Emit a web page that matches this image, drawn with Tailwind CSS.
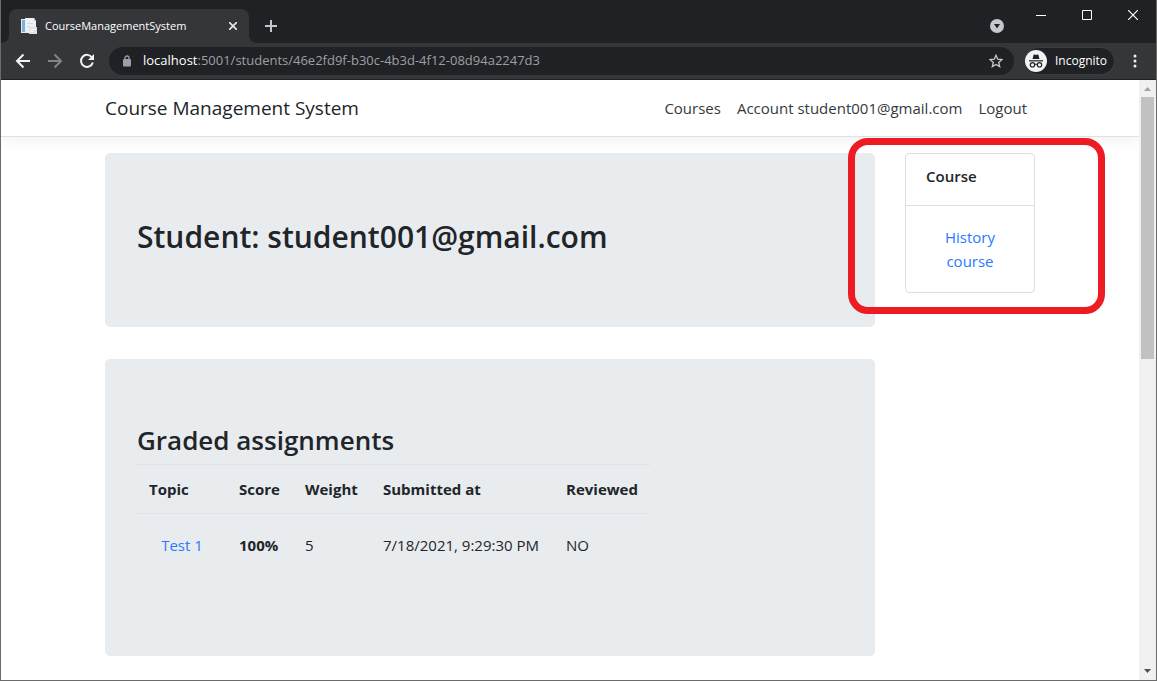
<!DOCTYPE html>
<html lang="en">
<head>
<meta charset="utf-8">
<title>CourseManagementSystem</title>
<script src="https://cdn.jsdelivr.net/npm/@tailwindcss/browser@4"></script>
</head>
<body class="font-['Open_Sans','Noto_Sans',sans-serif] text-[#212529]">
<div class="flex h-screen flex-col overflow-hidden border-x border-b border-[#6b6b6b] bg-white">

  <!-- Tab strip -->
  <div class="flex h-[43px] shrink-0 items-start bg-[#202124]">
    <div class="flex h-[43px] shrink-0 items-end pt-[9px]">
      <div class="h-2 w-2 bg-[#35363a]"><div class="h-2 w-2 rounded-br-lg bg-[#202124]"></div></div>
      <div class="flex h-[34px] w-60 items-center rounded-t-lg bg-[#35363a] pl-3 pr-2 text-white">
        <svg class="mr-2 h-4 w-4 shrink-0" viewBox="0 0 16 16" aria-hidden="true">
          <path d="M0 1h10v14H0z" fill="#e3e9ee"/>
          <path d="M1 2h3v12H1z" fill="#7fb0dc"/>
          <path d="M4 0h9l2 3v12H4z" fill="#eef0f2"/>
          <path d="M13 0v3h2z" fill="#b9bec4"/>
          <path d="M6 5h6v1H6zM6 8h3v1H6z" fill="#d3d9de"/>
          <path d="M8 9h8v7H8z" fill="#dde1e4"/>
          <path d="M9 11h6v1H9zM9 13h4v1H9z" fill="#f8f8f8"/>
        </svg>
        <span class="flex-1 whitespace-nowrap text-[11px]">CourseManagementSystem</span>
        <button class="flex h-4 w-4 items-center justify-center" aria-label="Close tab">
          <svg class="h-2 w-2" viewBox="0 0 8 8" fill="none" stroke="#e8eaed" stroke-width="1.600"><path d="M0 0l8 8M8 0L0 8"/></svg>
        </button>
      </div>
      <div class="h-2 w-2 bg-[#35363a]"><div class="h-2 w-2 rounded-bl-lg bg-[#202124]"></div></div>
    </div>
    <button class="mt-5 ml-2 h-3 w-3" aria-label="New tab">
      <svg class="h-3 w-3" viewBox="0 0 12 12" fill="none" stroke="#c4c7cb" stroke-width="2"><path d="M6 0v12M0 6h12"/></svg>
    </button>
    <div class="flex-1"></div>
    <button class="mt-[19px] mr-8 h-[14px] w-[14px]" aria-label="Search tabs">
      <svg class="h-[14px] w-[14px]" viewBox="0 0 14 14"><circle cx="7" cy="7" r="7" fill="#c4c7cb"/><path d="M4 5h6L7 9.500z" fill="#202124"/></svg>
    </button>
    <button class="mt-[10px] h-[10px] w-[10px]" aria-label="Minimize">
      <svg class="h-[10px] w-[10px]" viewBox="0 0 10 10" fill="none" stroke="#fff"><path d="M0 5.500h10"/></svg>
    </button>
    <button class="mt-[10px] ml-9 h-[10px] w-[10px]" aria-label="Maximize">
      <svg class="h-[10px] w-[10px]" viewBox="0 0 10 10" fill="none" stroke="#fff"><path d="M.5.5h9v9h-9z"/></svg>
    </button>
    <button class="mt-[10px] mr-[18px] ml-9 h-[10px] w-[10px]" aria-label="Close window">
      <svg class="h-[10px] w-[10px]" viewBox="0 0 10 10" fill="none" stroke="#fff" stroke-width="1.200"><path d="M0 0l10 10M10 0L0 10"/></svg>
    </button>
  </div>

  <!-- Toolbar -->
  <div class="flex h-[37px] shrink-0 items-center border-b border-[#202124] bg-[#35363a] pl-[14px] pr-4">
    <button aria-label="Back"><svg class="h-4 w-4" viewBox="0 0 16 16" fill="none" stroke="#f1f3f4" stroke-width="2"><path d="M15 8H2M8.500 1.500L2 8l6.500 6.500"/></svg></button>
    <button class="ml-4" aria-label="Forward"><svg class="h-4 w-4" viewBox="0 0 16 16" fill="none" stroke="#838488" stroke-width="2"><path d="M1 8h13M7.500 1.500L14 8l-6.500 6.500"/></svg></button>
    <button class="ml-4" aria-label="Reload"><svg class="h-4 w-4" viewBox="0 0 16 16" fill="none" stroke="#f1f3f4" stroke-width="2"><path d="M13 4.500A6 6 0 1 0 13.800 9.500"/><path d="M15 1v6H9z" fill="#f1f3f4" stroke="none"/></svg></button>
    <div class="ml-[14px] flex h-7 flex-1 items-center rounded-full bg-[#202124] pr-[11px] pl-[14px]">
      <svg class="h-3 w-2 shrink-0" viewBox="0 0 8 12" aria-hidden="true"><path d="M2 5V3a2 2 0 0 1 4 0v2" fill="none" stroke="#9aa0a6" stroke-width="1.300"/><rect y="4" width="8" height="7.500" rx="1" fill="#9aa0a6"/></svg>
      <a href="#" class="ml-3 flex-1 whitespace-nowrap text-[13px] text-[#9aa0a6]"><span class="text-white">localhost</span>:5001/students/46e2fd9f-b30c-4b3d-4f12-08d94a2247d3</a>
      <button aria-label="Bookmark"><svg class="h-[14px] w-[14px]" viewBox="0 0 14 14" fill="none" stroke="#c4c7cb" stroke-width="1.300"><path d="M7 1.300l1.700 3.900 4.200.4-3.200 2.800 1 4.200L7 10.400l-3.700 2.200 1-4.200L1.100 5.600l4.200-.4z"/></svg></button>
    </div>
    <button class="ml-[10px] flex h-7 w-[91px] items-center rounded-full border border-[#3c3d41] bg-[#202124] text-xs text-white" aria-label="Incognito">
      <svg class="mr-2 h-[22px] w-[22px] shrink-0" viewBox="0 0 22 22" fill="none"><circle cx="11" cy="11" r="11" fill="#f1f3f4"/><path d="M7.500 9l1.200-4.500h1l1.300.5 1.300-.5h1L14.500 9z" fill="#202124"/><path d="M4 10.800h14" stroke="#202124" stroke-width="1.200"/><circle cx="7.500" cy="14.800" r="2.200" stroke="#202124" stroke-width="1.200"/><circle cx="14.500" cy="14.800" r="2.200" stroke="#202124" stroke-width="1.200"/><path d="M9.700 14.500q1.300-.8 2.600 0" stroke="#202124"/></svg>Incognito
    </button>
    <button class="ml-[14px] flex w-[11px] justify-center" aria-label="Menu"><svg class="h-4 w-4 shrink-0" viewBox="0 0 16 16" fill="#f1f3f4"><circle cx="8" cy="3" r="1.500"/><circle cx="8" cy="8" r="1.500"/><circle cx="8" cy="13" r="1.500"/></svg></button>
  </div>

  <div class="flex min-h-0 flex-1">
    <!-- Page -->
    <div class="min-w-0 flex-1 overflow-hidden">
      <header class="border-b border-[#dee2e6] shadow-[0_4px_12px_rgba(0,0,0,0.05)]">
        <nav class="mx-auto flex h-14 max-w-[930px] items-center justify-between">
          <a href="#" class="pt-px text-[19px]">Course Management System</a>
          <div class="flex gap-4 pr-2 text-[15px] text-[#343a40]">
            <a href="#">Courses</a>
            <a href="#">Account student001@gmail.com</a>
            <a href="#">Logout</a>
          </div>
        </nav>
      </header>

      <main class="mx-auto mt-4 grid max-w-[930px] grid-cols-[1fr_130px] items-start gap-x-[30px]">
        <div class="flex flex-col gap-8">
          <section class="rounded-[5px] bg-[#e9ecef] px-8 pt-[65px] pb-[71px]">
            <h1 class="text-[30px] leading-[38px] font-semibold">Student: student001@gmail.com</h1>
          </section>
          <section class="rounded-[5px] bg-[#e9ecef] px-8 pt-[65px] pb-20">
            <h2 class="mb-[7px] text-[26px] leading-[33px] font-semibold">Graded assignments</h2>
            <table class="w-[513px] table-fixed border-collapse text-left text-[15px] leading-6 whitespace-nowrap">
              <colgroup><col class="w-[90px]"><col class="w-[66px]"><col class="w-[78px]"><col class="w-[183px]"><col class="w-24"></colgroup>
              <thead>
                <tr class="h-[49px] border-y border-[#dee2e6]">
                  <th class="px-3">Topic</th><th class="px-3">Score</th><th class="px-3">Weight</th><th class="px-3">Submitted at</th><th class="px-3">Reviewed</th>
                </tr>
              </thead>
              <tbody>
                <tr class="h-[62px]">
                  <td class="text-center"><a href="#" class="text-[#2a78ff]">Test 1</a></td>
                  <td class="px-3 font-bold">100%</td><td class="px-3">5</td><td class="px-3">7/18/2021, 9:29:30 PM</td><td class="px-3">NO</td>
                </tr>
              </tbody>
            </table>
          </section>
        </div>

        <aside class="relative">
          <div class="rounded border border-[#dfdfdf] bg-white text-[15px] leading-6">
            <h2 class="border-b border-[#dfdfdf] px-5 pt-[10px] pb-[17px] font-semibold">Course</h2>
            <a href="#" class="block px-8 py-[19px] text-center text-[#2a78ff]">History course</a>
          </div>
          <!-- Highlight frame drawn over the card -->
          <div class="pointer-events-none absolute -top-[15px] -right-[70px] -bottom-[21px] -left-[57px] rounded-[20px] border-[7px] border-[#ed1c24]"></div>
        </aside>
      </main>
    </div>

    <!-- Scrollbar -->
    <div class="flex w-[17px] shrink-0 flex-col items-center bg-[#f1f1f1]" aria-hidden="true">
      <svg class="h-[17px] w-[17px] shrink-0" viewBox="0 0 17 17"><path d="M5 11h7L8.500 7z" fill="#a3a3a3"/></svg>
      <div class="h-[262px] w-[13px] bg-[#c1c1c1]"></div>
      <div class="flex-1"></div>
      <svg class="h-[17px] w-[17px] shrink-0" viewBox="0 0 17 17"><path d="M5 6h7l-3.500 4z" fill="#505050"/></svg>
    </div>
  </div>
</div>
</body>
</html>
